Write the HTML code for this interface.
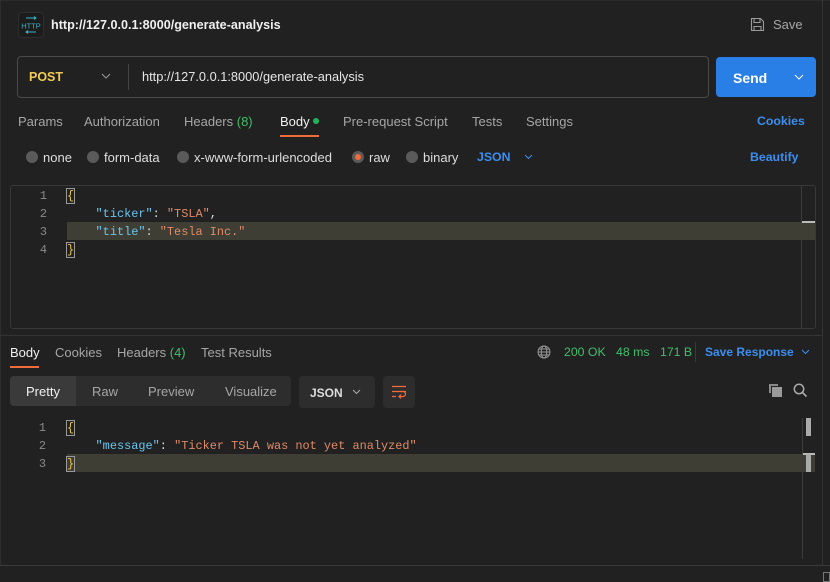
<!DOCTYPE html>
<html><head><meta charset="utf-8">
<style>
*{box-sizing:border-box;margin:0;padding:0}
body{width:830px;height:582px;background:#212121;font-family:"Liberation Sans",sans-serif;color:#cfcfcf;position:relative;overflow:hidden;font-size:13px}
.a{position:absolute;white-space:nowrap}
.mono{font-family:"Liberation Mono",monospace;font-size:11.9px}
.gray{color:#a6a6a6}
.blue{color:#3b8ef0}
.green{color:#3fbf6a}
.radio{position:absolute;width:12px;height:12px;border-radius:50%;background:#5a5a5a}
</style></head><body>
<div class="a" style="left:0;top:0;width:830px;height:1px;background:#2c2c2c"></div>
<div class="a" style="left:822px;top:0;width:1px;height:566px;background:#333"></div>
<div class="a" style="left:0;top:0;width:1px;height:566px;background:#2e2e2e"></div>

<div class="a" style="left:18px;top:12px;width:26px;height:26px;border:1px solid #2e2e2e;border-radius:4px;background:#1c1c1c"></div>
<svg class="a" style="left:21px;top:15px" width="20" height="20" viewBox="0 0 20 20">
<path d="M5 3h10M13 1.5l2 1.5-2 1.5M15 17H5M7 15.5 5 17l2 1.5" stroke="#3ab4c8" stroke-width="1" fill="none"/>
<text x="10" y="13.5" font-size="7.5" fill="#3ab4c8" text-anchor="middle" font-family="Liberation Sans">HTTP</text></svg>
<div class="a" style="left:51px;top:18px;font-size:12.6px;font-weight:bold;color:#f0f0f0">http://127.0.0.1:8000/generate-analysis</div>
<svg class="a" style="left:750px;top:17px" width="15" height="15" viewBox="0 0 15 15"><path d="M1.5 1.5h9l3 3v9h-12z M4 1.5v4h6v-4 M4 13.5v-4h7v4" stroke="#9a9a9a" fill="none" stroke-width="1.1"/></svg>
<div class="a gray" style="left:773px;top:17px;font-size:13px">Save</div>

<div class="a" style="left:17px;top:56px;width:692px;height:42px;border:1px solid #4a4a4a;border-radius:4px"></div>
<div class="a" style="left:29px;top:70px;font-weight:bold;color:#f2cb54;font-size:12.5px">POST</div>
<svg class="a" style="left:101px;top:73px" width="10" height="7" viewBox="0 0 10 7"><path d="M1 1l4 4 4-4" stroke="#9a9a9a" fill="none"/></svg>
<div class="a" style="left:128px;top:64px;width:1px;height:26px;background:#444"></div>
<div class="a" style="left:142px;top:69px;color:#e6e6e6;font-size:12.8px">http://127.0.0.1:8000/generate-analysis</div>
<div class="a" style="left:716px;top:57px;width:100px;height:40px;background:#2a7fe6;border-radius:4px"></div>
<div class="a" style="left:733px;top:70px;font-weight:bold;color:#fff;font-size:14px">Send</div>
<svg class="a" style="left:794px;top:74px" width="10" height="7" viewBox="0 0 10 7"><path d="M1 1l4 4 4-4" stroke="#fff" fill="none"/></svg>

<div class="a gray" style="left:18px;top:114px">Params</div>
<div class="a gray" style="left:84px;top:114px">Authorization</div>
<div class="a gray" style="left:184px;top:114px">Headers <span class="green">(8)</span></div>
<div class="a" style="left:280px;top:114px;color:#f0f0f0">Body</div>
<div class="a" style="left:313px;top:118px;width:6px;height:6px;border-radius:50%;background:#1fb45c"></div>
<div class="a" style="left:280px;top:135px;width:39px;height:2px;background:#f26b3a"></div>
<div class="a gray" style="left:343px;top:114px">Pre-request Script</div>
<div class="a gray" style="left:472px;top:114px">Tests</div>
<div class="a gray" style="left:526px;top:114px">Settings</div>
<div class="a blue" style="left:757px;top:114px;font-weight:bold;font-size:12.3px">Cookies</div>

<div class="radio" style="left:26px;top:151px"></div><div class="a" style="left:43px;top:150px;color:#ddd">none</div>
<div class="radio" style="left:87px;top:151px"></div><div class="a" style="left:104px;top:150px;color:#ddd">form-data</div>
<div class="radio" style="left:177px;top:151px"></div><div class="a" style="left:194px;top:150px;color:#ddd">x-www-form-urlencoded</div>
<div class="radio" style="left:352px;top:151px"></div><div class="a" style="left:355px;top:154px;width:6px;height:6px;border-radius:50%;background:#f26b3a"></div>
<div class="a" style="left:369px;top:150px;color:#ddd">raw</div>
<div class="radio" style="left:406px;top:151px"></div><div class="a" style="left:423px;top:150px;color:#ddd">binary</div>
<div class="a blue" style="left:477px;top:150px;font-weight:bold;font-size:12.3px">JSON</div>
<svg class="a" style="left:524px;top:154px" width="9" height="6" viewBox="0 0 9 6"><path d="M1 1l3.5 3.5L8 1" stroke="#3b8ef0" fill="none"/></svg>
<div class="a blue" style="left:750px;top:150px;font-weight:bold;font-size:12.3px">Beautify</div>

<div class="a" style="left:10px;top:185px;width:806px;height:144px;border:1px solid #383838;border-radius:3px"></div>
<div class="a" style="left:801px;top:186px;width:1px;height:142px;background:#3c3c3c"></div>
<div class="a" style="left:67px;top:222px;width:748px;height:18px;background:#3e3e34"></div>
<div class="a" style="left:802px;top:221px;width:13px;height:2px;background:#bbb"></div>
<div class="a mono" style="left:37px;top:187px;color:#8a8a8a;line-height:18px;text-align:right;width:10px">1<br>2<br>3<br>4</div>
<div class="a mono" style="left:67px;top:187px;line-height:18px;color:#ddd">
<span style="outline:1px solid #999;color:#e8c547">{</span><br>
&nbsp;&nbsp;&nbsp;&nbsp;<span style="color:#6cc4f0">"ticker"</span>: <span style="color:#e08a67">"TSLA"</span>,<br>
&nbsp;&nbsp;&nbsp;&nbsp;<span style="color:#6cc4f0">"title"</span>: <span style="color:#e08a67">"Tesla Inc."</span><br>
<span style="outline:1px solid #999;color:#e8c547">}</span></div>

<div class="a" style="left:0;top:335px;width:822px;height:1px;background:#333"></div>

<div class="a" style="left:10px;top:345px;color:#f0f0f0">Body</div>
<div class="a" style="left:10px;top:366px;width:29px;height:2px;background:#f26b3a"></div>
<div class="a gray" style="left:55px;top:345px">Cookies</div>
<div class="a gray" style="left:117px;top:345px">Headers <span class="green">(4)</span></div>
<div class="a gray" style="left:201px;top:345px">Test Results</div>
<svg class="a" style="left:537px;top:345px" width="14" height="14" viewBox="0 0 14 14"><g stroke="#999" fill="none" stroke-width="1"><circle cx="7" cy="7" r="6"/><ellipse cx="7" cy="7" rx="2.8" ry="6"/><path d="M1 7h12M2 4h10M2 10h10"/></g></svg>
<div class="a green" style="left:564px;top:345px;font-size:12.3px">200 OK</div>
<div class="a green" style="left:616px;top:345px;font-size:12.3px">48 ms</div>
<div class="a green" style="left:660px;top:345px;font-size:12.3px">171 B</div>
<div class="a" style="left:695px;top:342px;width:1px;height:20px;background:#3a3a3a"></div>
<div class="a blue" style="left:705px;top:345px;font-weight:bold;font-size:12px">Save Response</div>
<svg class="a" style="left:801px;top:349px" width="9" height="6" viewBox="0 0 9 6"><path d="M1 1l3.5 3.5L8 1" stroke="#3b8ef0" fill="none"/></svg>

<div class="a" style="left:10px;top:376px;width:281px;height:30px;background:#2d2d2d;border-radius:4px"></div>
<div class="a" style="left:10px;top:376px;width:66px;height:30px;background:#3a3a3a;border-radius:4px 0 0 4px"></div>
<div class="a" style="left:26px;top:384px;color:#f0f0f0">Pretty</div>
<div class="a gray" style="left:92px;top:384px">Raw</div>
<div class="a gray" style="left:148px;top:384px">Preview</div>
<div class="a gray" style="left:225px;top:384px">Visualize</div>
<div class="a" style="left:299px;top:376px;width:76px;height:32px;background:#2d2d2d;border-radius:4px"></div>
<div class="a" style="left:310px;top:386px;color:#ddd;font-weight:bold;font-size:12px">JSON</div>
<svg class="a" style="left:352px;top:389px" width="9" height="6" viewBox="0 0 9 6"><path d="M1 1l3.5 3.5L8 1" stroke="#aaa" fill="none"/></svg>
<div class="a" style="left:383px;top:376px;width:32px;height:32px;background:#2d2d2d;border-radius:4px"></div>
<svg class="a" style="left:391px;top:384px" width="16" height="16" viewBox="0 0 16 16"><g stroke="#f26b3a" fill="none" stroke-width="1.2"><path d="M1 2.5h14M1 7.5h14M1 12.5h4"/><path d="M9 7.5h3a2.5 2.5 0 0 1 0 5H8M10 10.5l-2 2 2 2"/></g></svg>
<svg class="a" style="left:768px;top:383px" width="15" height="15" viewBox="0 0 15 15"><path d="M1 1h9v2H3v7H1z" fill="#8a8a8a"/><rect x="4" y="4" width="10" height="10" fill="#9a9a9a"/></svg>
<svg class="a" style="left:793px;top:383px" width="15" height="15" viewBox="0 0 15 15"><circle cx="6" cy="6" r="4.7" stroke="#aaa" stroke-width="1.5" fill="none"/><path d="M9.5 9.5l4 4" stroke="#aaa" stroke-width="1.6"/></svg>

<div class="a" style="left:67px;top:454px;width:748px;height:18px;background:#3e3e34"></div>
<div class="a" style="left:802px;top:418px;width:1px;height:141px;background:#3c3c3c"></div>
<div class="a" style="left:806px;top:418px;width:5px;height:18px;background:#aaa"></div>
<div class="a" style="left:803px;top:453px;width:12px;height:2px;background:#bbb"></div>
<div class="a" style="left:806px;top:454px;width:5px;height:18px;background:#aaa"></div>
<div class="a mono" style="left:36px;top:419px;color:#8a8a8a;line-height:18px;text-align:right;width:10px">1<br>2<br>3</div>
<div class="a mono" style="left:67px;top:419px;line-height:18px;color:#ddd">
<span style="outline:1px solid #999;color:#e8c547">{</span><br>
&nbsp;&nbsp;&nbsp;&nbsp;<span style="color:#6cc4f0">"message"</span>: <span style="color:#e08a67">"Ticker TSLA was not yet analyzed"</span><br>
<span style="outline:1px solid #999;color:#e8c547">}</span></div>

<div class="a" style="left:0;top:565px;width:830px;height:1px;background:#3a3a3a"></div>
<div class="a" style="left:823px;top:572px;width:7px;height:10px;border:1px solid #777"></div>
</body></html>
